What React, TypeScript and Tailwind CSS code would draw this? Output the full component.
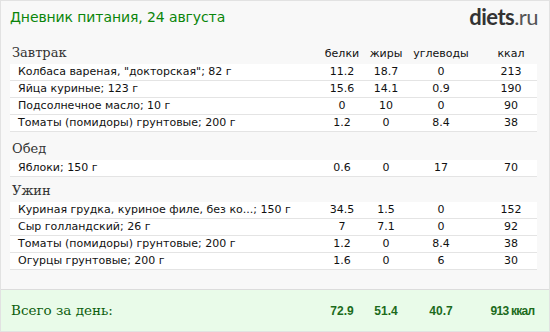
const meals = [
  {
    name: 'Завтрак',
    items: [
      ['Колбаса вареная, "докторская"; 82 г', '11.2', '18.7', '0', '213'],
      ['Яйца куриные; 123 г', '15.6', '14.1', '0.9', '190'],
      ['Подсолнечное масло; 10 г', '0', '10', '0', '90'],
      ['Томаты (помидоры) грунтовые; 200 г', '1.2', '0', '8.4', '38'],
    ],
  },
  {
    name: 'Обед',
    items: [['Яблоки; 150 г', '0.6', '0', '17', '70']],
  },
  {
    name: 'Ужин',
    items: [
      ['Куриная грудка, куриное филе, без ко...; 150 г', '34.5', '1.5', '0', '152'],
      ['Сыр голландский; 26 г', '7', '7.1', '0', '92'],
      ['Томаты (помидоры) грунтовые; 200 г', '1.2', '0', '8.4', '38'],
      ['Огурцы грунтовые; 200 г', '1.6', '0', '6', '30'],
    ],
  },
];

const cols = 'grid grid-cols-[1fr_40px_48px_62px_65px]';

export default function App() {
  return (
    <div className="w-[550px] h-[332px] bg-[#f8f8f8] border border-[#e2e2e2] flex flex-col overflow-hidden">
      {/* Header */}
      <div className="flex items-center justify-between pl-[9px] pr-[11px] h-[32px]">
        <h1 className="text-[14px] tracking-[-0.1px] text-[#0a850a] font-['DejaVu_Sans',sans-serif]">Дневник питания, 24 августа</h1>
        <div className="text-[22px] leading-none font-['Lato',sans-serif] text-[#333] tracking-tight">
          <span className="font-bold">diets</span>
          <span className="text-[#555]">.ru</span>
        </div>
      </div>

      {/* Meals */}
      <div className="flex flex-col px-[9px] pr-[12px] pt-[6px] flex-1 font-['DejaVu_Sans',sans-serif] text-[11px] text-[#111]">
        {meals.map((meal, mi) => (
          <div key={meal.name} className="flex flex-col">
            <div className={`${cols} items-end pb-[2px] ${mi === 1 ? 'h-[28px]' : 'h-[25px]'}`}>
              <span className="font-['DejaVu_Serif',serif] text-[13px] leading-[18px] text-[#333] pl-[2px]">{meal.name}</span>
              {mi === 0 ? (
                <>
                  <span className="text-center leading-[16px]">белки</span>
                  <span className="text-center leading-[16px]">жиры</span>
                  <span className="text-center leading-[16px]">углеводы</span>
                  <span className="text-center pl-[13px] leading-[16px]">ккал</span>
                </>
              ) : null}
            </div>
            {meal.items.map((it, i) => (
              <div key={i} className={`${cols} items-center h-[17px] bg-white border-b border-[#e4e4e4]`}>
                <span className="pl-[8px] truncate">{it[0]}</span>
                <span className="text-center">{it[1]}</span>
                <span className="text-center">{it[2]}</span>
                <span className="text-center">{it[3]}</span>
                <span className="text-center pl-[13px]">{it[4]}</span>
              </div>
            ))}
          </div>
        ))}
      </div>

      {/* Totals */}
      <div className={`${cols} items-center h-[42px] bg-[#e9fbe9] border-t border-[#dcdcdc] pl-[10px] pr-[12px]`}>
        <span className="font-['DejaVu_Serif',serif] text-[13.5px] text-[#0d5e0d]">Всего за день:</span>
        {['72.9', '51.4', '40.7'].map(v => (
          <span key={v} className="text-center font-['Liberation_Sans',sans-serif] font-bold text-[12px] text-[#1c6b1c]">{v}</span>
        ))}
        <span className="text-center pl-[16px] font-['Liberation_Sans',sans-serif] font-bold text-[12px] tracking-[-0.7px] text-[#1c6b1c] whitespace-nowrap">913 ккал</span>
      </div>
    </div>
  );
}
